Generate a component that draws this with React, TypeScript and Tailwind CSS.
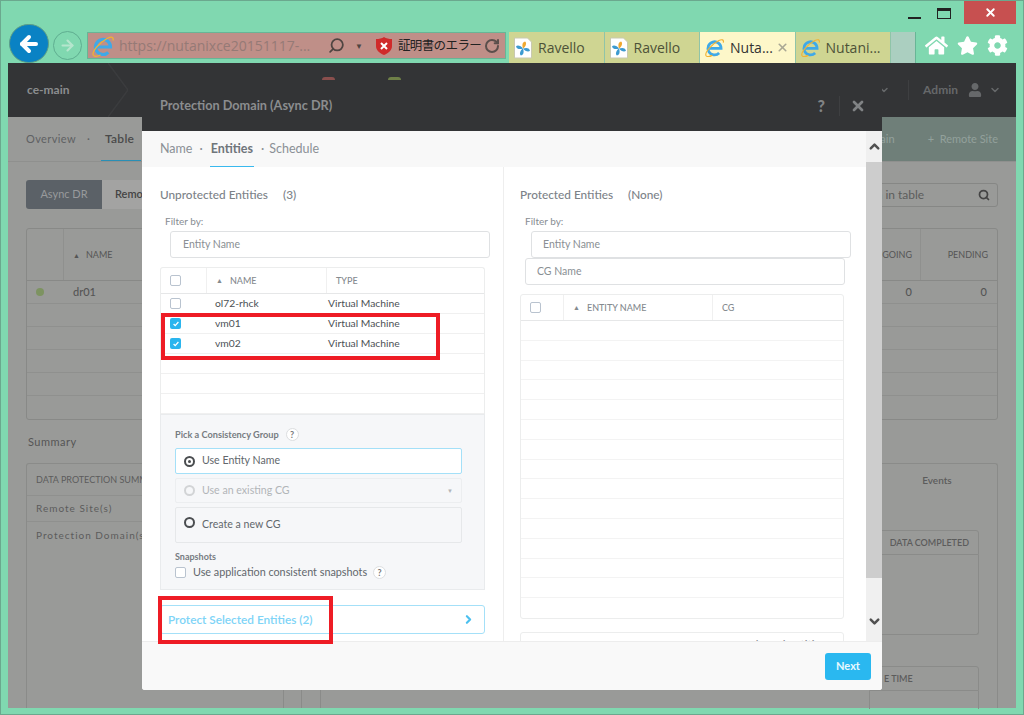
import { ArrowLeft, ArrowRight, ChevronDown, ChevronRight, ChevronUp, RotateCw, Search, X } from 'lucide-react';
import { FaCog, FaHome, FaStar, FaUser } from 'react-icons/fa';

const modalFont = { fontFamily: 'Lato, "Noto Sans", sans-serif' };

function IeIcon({ size = 24 }: { size?: number }) {
  return (
    <svg viewBox="0 0 24 24" width={size} height={size} fill="none" className="shrink-0">
      <path d="M6 13h13.5a7.5 7.5 0 1 0-2.2 5.3" stroke="#3fa9e8" strokeWidth="3.2" />
      <path d="M2.5 21.5C0 18 9 8 17 4c3.5-1.7 6-1 5 2.5" stroke="#f2b233" strokeWidth="1.3" />
      <path d="M2.5 21.5c1.5 1.3 4.5.7 7-.5" stroke="#f2b233" strokeWidth="1.3" />
    </svg>
  );
}

function RavelloIcon() {
  return (
    <svg viewBox="0 0 20 22" width="20" height="22" className="shrink-0">
      <path d="M1.5 1h13l4 4v16h-17z" fill="#fff" stroke="#c9c9b0" />
      <g transform="translate(10 11.5)">
        <path d="M0 0C-1-3-1-6 2-7c2 1 1 5-2 7z" fill="#f0a830" />
        <path d="M0 0C3-1 6-1 7 2c-1 2-5 1-7-2z" fill="#3c9ad0" />
        <path d="M0 0C1 3 1 6-2 7c-2-1-1-5 2-7z" fill="#3c9ad0" />
        <path d="M0 0C-3 1-6 1-7-2c1-2 5-1 7 2z" fill="#3c9ad0" />
      </g>
    </svg>
  );
}

function BrowserTab({ label, active, ie, close }: { label: string; active?: boolean; ie?: boolean; close?: boolean }) {
  return (
    <div
      className={`flex h-[31px] w-[95.5px] shrink-0 items-center gap-[5px] border-r border-[#8fc4a8] pl-[4px] text-[14px] ${
        active ? 'bg-[#fdf7c9] text-[#333]' : 'bg-[#cfd592] text-[#4d5238]'
      }`}
    >
      {ie ? <IeIcon size={21} /> : <RavelloIcon />}
      <span className="whitespace-nowrap">{label}</span>
      {close && <X size={13} strokeWidth={3} className="-ml-[2px] text-[#a9a794]" />}
    </div>
  );
}

function Checkbox({ checked }: { checked?: boolean }) {
  if (checked) {
    return (
      <span className="flex h-[11px] w-[11px] shrink-0 items-center justify-center rounded-[2px] bg-[#2ab5ee]">
        <svg viewBox="0 0 10 10" width="8" height="8" fill="none">
          <path d="M2 5l2 2 4-4.5" stroke="#fff" strokeWidth="1.6" />
        </svg>
      </span>
    );
  }
  return <span className="h-[11px] w-[11px] shrink-0 rounded-[2px] border border-[#b9c3cf] bg-white" />;
}

function Radio({ tone = 'dark', dot }: { tone?: 'dark' | 'light'; dot?: boolean }) {
  return (
    <span
      className={`flex h-[11px] w-[11px] shrink-0 items-center justify-center rounded-full border-2 ${
        tone === 'dark' ? 'border-[#4a4d50]' : 'border-[#d2d4d6]'
      }`}
    >
      {dot && <span className="h-[3px] w-[3px] rounded-full bg-[#4a4d50]" />}
    </span>
  );
}

function Help() {
  return (
    <span className="flex h-[13px] w-[13px] items-center justify-center rounded-full border border-[#dcdee0] bg-white text-[9px] font-bold leading-none text-[#777]">
      ?
    </span>
  );
}

function TextInput({ placeholder, className }: { placeholder: string; className: string }) {
  return (
    <div className={`flex h-[27px] items-center rounded-[3px] border border-[#dfe1e3] bg-white text-[10.5px] text-[#8a8f94] ${className}`}>
      {placeholder}
    </div>
  );
}

const entityRows = [
  { name: 'ol72-rhck', type: 'Virtual Machine', checked: false },
  { name: 'vm01', type: 'Virtual Machine', checked: true },
  { name: 'vm02', type: 'Virtual Machine', checked: true },
  { name: '', type: '', checked: false },
  { name: '', type: '', checked: false },
  { name: '', type: '', checked: false },
];

function Modal() {
  return (
    <div style={modalFont} className="absolute left-[134px] top-[17px] flex h-[610px] w-[740px] flex-col overflow-hidden rounded-b-[3px] bg-white">
      {/* Header */}
      <div className="flex h-[51px] shrink-0 items-center justify-between bg-[#333436] pl-[18px] pr-[16px]">
        <span className="text-[12.7px] font-bold text-[#8b8d8f]">Protection Domain (Async DR)</span>
        <div className="flex items-center text-[#818385]">
          <span className="text-[16px] font-black leading-none">?</span>
          <span className="ml-[14px] mr-[10px] h-[20px] w-px bg-[#3e3f41]" />
          <X size={16} strokeWidth={4} />
        </div>
      </div>

      <div className="flex min-h-0 flex-1">
        <div className="flex min-w-0 flex-1 flex-col">
          {/* Steps */}
          <div className="flex h-[36px] shrink-0 items-center gap-[7px] bg-[#f8f8f8] pl-[18px] text-[12.5px] text-[#8b9096]">
            <span>Name</span>
            <span>·</span>
            <span className="relative flex h-full items-center px-[1px] font-bold text-[#6f757b]">
              Entities
              <span className="absolute inset-x-0 bottom-0 h-[1px] bg-[#39b9ee]" />
            </span>
            <span>·</span>
            <span className="-ml-[2px]">Schedule</span>
          </div>

          <div className="flex min-h-0 flex-1 overflow-hidden">
            {/* Unprotected */}
            <div className="w-[362px] shrink-0 border-r border-[#eeeeee] pl-[18px] pt-[20px]">
              <div className="flex h-[16px] items-center text-[11.8px] font-medium text-[#7c8288]">
                <span className="w-[123px]">Unprotected Entities</span>
                <span>(3)</span>
              </div>
              <div className="ml-[5px] mt-[11px] h-[14px] text-[10px] leading-[14px] text-[#888d92]">Filter by:</div>
              <TextInput placeholder="Entity Name" className="ml-[10px] mt-[3px] w-[320px] pl-[12px]" />

              <div className="mt-[9px] w-[325px] overflow-hidden rounded-t-[3px] border border-b-0 border-[#eceded] text-[10.3px] text-[#4c5155]">
                <div className="flex h-[26px] items-center border-b border-[#e6e7e8] text-[#858a8f]">
                  <span className="flex h-full w-[46px] items-center border-r border-[#f0f0f0] pl-[9px]">
                    <Checkbox />
                  </span>
                  <span className="flex h-full w-[120px] items-center border-r border-[#f0f0f0] pl-[9px] text-[9px] font-medium">
                    <span className="mr-[7px] text-[7px]">▲</span>NAME
                  </span>
                  <span className="pl-[9px] text-[9px] font-medium">TYPE</span>
                </div>
                {entityRows.map((row, i) => (
                  <div key={i} className="flex h-[20px] items-center border-b border-[#f0f0f0]">
                    <span className="flex w-[46px] pl-[9px]">{i < 3 && <Checkbox checked={row.checked} />}</span>
                    <span className="w-[121px] pl-[8px]">{row.name}</span>
                    <span>{row.type}</span>
                  </div>
                ))}
              </div>

              {/* Consistency group */}
              <div className="h-[176px] w-[325px] border border-[#e9ebed] bg-[#f6f7f9] pl-[14px] pt-[13px]">
                <div className="flex h-[13px] items-center gap-[7px] text-[9.2px] font-bold text-[#777c81]">
                  Pick a Consistency Group <Help />
                </div>
                <div className="mt-[7px] flex h-[26px] w-[287px] items-center gap-[7px] rounded-[2px] border border-[#a4e0f8] bg-white pl-[8px] text-[10.6px] text-[#62676c]">
                  <Radio dot /> Use Entity Name
                </div>
                <div className="mt-[4px] flex h-[25px] w-[287px] items-center gap-[7px] rounded-[2px] border border-[#eceef0] pl-[8px] pr-[8px] text-[10.6px] text-[#b2b5b8]">
                  <Radio tone="light" /> Use an existing CG
                  <span className="ml-auto text-[6px]">▼</span>
                </div>
                <div className="mt-[4px] flex h-[36px] w-[287px] items-start gap-[7px] rounded-[2px] border border-[#e6e8ea] pl-[8px] pt-[9px] text-[10.6px] text-[#62676c]">
                  <Radio /> Create a new CG
                </div>
                <div className="mt-[7px] h-[13px] text-[9px] font-bold leading-[13px] text-[#777c81]">Snapshots</div>
                <div className="mt-[3px] flex h-[13px] items-center text-[10.8px] text-[#62676c]">
                  <Checkbox />
                  <span className="ml-[7px] mr-[6px]">Use application consistent snapshots</span>
                  <Help />
                </div>
              </div>

              <div className="mt-[15px] flex h-[29px] w-[325px] items-center justify-between rounded-[3px] border border-[#a4e0f8] pl-[7px] pr-[9px] text-[11.8px] font-semibold text-[#7ed4f7]">
                Protect Selected Entities (2)
                <ChevronRight size={13} strokeWidth={4} className="text-[#4cc0ef]" />
              </div>
            </div>

            {/* Protected */}
            <div className="min-w-0 flex-1 pl-[16px] pt-[20px]">
              <div className="flex h-[16px] items-center text-[11.8px] font-medium text-[#7c8288]">
                <span className="w-[108px]">Protected Entities</span>
                <span>(None)</span>
              </div>
              <div className="ml-[5px] mt-[11px] h-[14px] text-[10px] leading-[14px] text-[#888d92]">Filter by:</div>
              <TextInput placeholder="Entity Name" className="ml-[11px] mt-[3px] w-[320px] pl-[11px]" />
              <TextInput placeholder="CG Name" className="ml-[5px] w-[320px] pl-[11px]" />

              <div className="mt-[9px] w-[324px] overflow-hidden rounded-[3px] border border-[#eceded]">
                <div className="flex h-[26px] items-center border-b border-[#e6e7e8] text-[9px] font-medium text-[#858a8f]">
                  <span className="flex h-full w-[43px] items-center border-r border-[#f0f0f0] pl-[9px]">
                    <Checkbox />
                  </span>
                  <span className="flex h-full w-[149px] items-center border-r border-[#f0f0f0] pl-[9px]">
                    <span className="mr-[7px] text-[7px]">▲</span>ENTITY NAME
                  </span>
                  <span className="pl-[9px]">CG</span>
                </div>
                {Array.from({ length: 15 }, (_, i) => (
                  <div key={i} className="h-[19.8px] border-b border-[#f3f3f3] last:border-b-0" />
                ))}
              </div>

              <div className="mt-[13px] h-[30px] w-[324px] rounded-[3px] border border-[#eceded] pr-[18px] pt-[4px] text-right text-[11px] font-semibold text-[#8a8f94]">
                Unprotect Selected Entities
              </div>
            </div>
          </div>
        </div>

        {/* Scrollbar */}
        <div className="flex w-[16px] shrink-0 flex-col items-center bg-[#f0f0f0]">
          <div className="flex h-[31px] w-full items-center justify-center bg-[#f0f0f0]">
            <ChevronUp size={15} strokeWidth={4} className="text-[#505050]" />
          </div>
          <div className="h-[416px] w-full bg-[#cdcdcd]" />
          <div className="mt-[36px] flex justify-center">
            <ChevronDown size={15} strokeWidth={4} className="text-[#505050]" />
          </div>
        </div>
      </div>

      {/* Footer */}
      <div className="flex h-[49px] shrink-0 items-center justify-end border-t border-[#ededed] bg-[#f9f9f9] pr-[11px]">
        <div className="flex h-[27px] w-[46px] items-center justify-center rounded-[3px] bg-[#2ab8f0] text-[11px] font-bold text-[#e9f8fe]">Next</div>
      </div>
    </div>
  );
}

function Background() {
  return (
    <div style={modalFont} className="flex h-full flex-col bg-[#999a98]">
      <div className="flex h-[54px] shrink-0 items-center bg-[#333436] text-[11px] font-bold text-[#8b8d8f]">
        <span className="pl-[19px] text-[12px]">ce-main</span>
        <span className="ml-auto mr-[18px] text-[#66686a]"><ChevronDown size={12} strokeWidth={3} /></span>
        <span className="mr-[14px] h-[20px] w-px bg-[#3e3f41]" />
        <span className="text-[12px] text-[#66686a]">Admin</span>
        <FaUser size={14} className="ml-[10px] text-[#66686a]" />
        <ChevronDown size={12} strokeWidth={3} className="ml-[7px] mr-[15px] text-[#66686a]" />
      </div>

      <div className="flex h-[45px] shrink-0 items-stretch border-b border-[#8f908e] pl-[18px] text-[11px] text-[#5f6163]">
        <span className="flex items-center tracking-[0.4px]">Overview</span>
        <span className="mx-[11px] flex items-center">·</span>
        <span className="relative flex items-center px-[4px] text-[12px] font-semibold tracking-[0.3px] text-[#4a4a4a]">
          Table
          <span className="absolute bottom-0 left-0 h-[1px] w-[40px] bg-[#2a8fb5]" />
        </span>
        <div className="ml-auto flex w-[300px] items-center justify-end gap-[33px] bg-[#6f7f79] pr-[18px] text-[11px] text-[#93a19c]">
          <span className="whitespace-nowrap">+ Protection Domain</span>
          <span className="whitespace-nowrap">+&nbsp;&nbsp;Remote Site</span>
        </div>
      </div>

      <div className="flex min-h-0 flex-1 flex-col px-[18px]">
        <div className="mt-[18px] flex h-[29px] shrink-0 items-center justify-between">
          <div className="flex h-full overflow-hidden rounded-[3px] text-[11px]">
            <span className="flex w-[76px] items-center justify-center bg-[#5b6167] text-[#989a9c]">Async DR</span>
            <span className="flex w-[80px] items-center bg-[#a3a3a2] pl-[13px] font-semibold text-[#444]">Remote Site</span>
          </div>
          <div className="flex h-[24px] w-[160px] items-center justify-between rounded-[3px] border border-[#868785] pl-[8px] pr-[7px] text-[12px] text-[#5c5d5c]">
            Search in table
            <Search size={12} strokeWidth={3.5} className="text-[#444]" />
          </div>
        </div>

        <div className="mt-[19px] shrink-0 rounded-[3px] border border-[#888987] text-[#555]">
          <div className="flex h-[52px] items-center border-b border-[#888987] text-[9px]">
            <span className="h-full w-[37px] border-r border-[#8f908e]" />
            <span className="pl-[9px]"><span className="mr-[6px] text-[7px]">▲</span>NAME</span>
            <span className="ml-auto flex h-full w-[100px] items-center justify-end pr-[8px]">ONGOING</span>
            <span className="flex h-full w-[77px] items-center justify-end border-l border-[#8f908e] pr-[9px]">PENDING</span>
          </div>
          <div className="flex h-[23px] items-center border-b border-[#8f908e] text-[11px]">
            <span className="ml-[9px] h-[8px] w-[8px] rounded-full bg-[#7d9361]" />
            <span className="ml-[29px] font-medium">dr01</span>
            <span className="ml-auto w-[30px] text-right font-medium">0</span>
            <span className="w-[85px] pr-[10px] text-right font-medium">0</span>
          </div>
          {Array.from({ length: 5 }, (_, i) => (
            <div key={i} className="h-[23px] border-b border-[#8f908e] last:border-b-0" />
          ))}
        </div>

        <div className="mt-[14px] h-[16px] shrink-0 pl-[2px] text-[11px] leading-[16px] tracking-[0.5px] text-[#555]">Summary</div>

        <div className="mt-[13px] flex min-h-0 flex-1 justify-between rounded-t-[3px] border border-b-0 border-[#8a8b89] text-[#5c5c5c]">
          <div className="flex w-[257px] flex-col text-[10px]">
            <div className="flex h-[32px] shrink-0 items-center whitespace-nowrap border-b border-[#8f908e] pl-[9px] text-[9px]">DATA PROTECTION SUMMARY</div>
            <div className="flex h-[26px] shrink-0 items-center border-b border-[#8f908e] pl-[9px] tracking-[1px]">Remote Site(s)</div>
            <div className="flex h-[27px] shrink-0 items-center pl-[9px] tracking-[1px]">Protection Domain(s)</div>
            <div className="mt-auto flex h-[18px] shrink-0 translate-x-[256px]">
              <span className="w-[19px] border-x border-[#8a8b89]" />
              <span className="w-[19px] border-r border-[#8a8b89]" />
            </div>
          </div>

          <div className="flex flex-col items-end pr-[18px]">
            <div className="flex h-[32px] w-[96px] shrink-0 items-center justify-center pl-[12px] text-[10px] font-semibold">Events</div>
            <div className="mt-[34px] flex h-[25px] w-[110px] shrink-0 items-center justify-end rounded-t-[3px] border border-[#8a8b89] pr-[9px] text-[9px] font-semibold">DATA COMPLETED</div>
            <div className="h-[80px] w-[110px] shrink-0 rounded-b-[3px] border border-t-0 border-[#8a8b89]" />
            <div className="mt-[31px] flex h-[25px] w-[110px] shrink-0 items-center rounded-t-[3px] border border-[#8a8b89] pl-[14px] text-[9px] font-semibold">E TIME</div>
            <div className="h-[18px] w-[110px] shrink-0 border-x border-[#8a8b89]" />
          </div>
        </div>
      </div>
    </div>
  );
}

export default function App() {
  return (
    <div className="relative flex h-[715px] w-[1024px] flex-col overflow-hidden border border-[#6ba88e] bg-[#80d8b0]" style={{ fontFamily: '"Open Sans", sans-serif' }}>
      {/* Window buttons */}
      <div className="flex h-[23px] shrink-0 justify-end pr-[7px]">
        <div className="mr-[16px] mt-[16px] h-[2px] w-[13px] bg-[#222]" />
        <div className="mr-[13px] mt-[7px] h-[11px] w-[14px] border border-t-[3px] border-[#222]" />
        <div className="flex h-[23px] w-[52px] items-center justify-center bg-[#c75050]">
          <X size={13} strokeWidth={3.5} className="text-white" />
        </div>
      </div>

      {/* Toolbar */}
      <div className="relative z-10 flex h-[39px] shrink-0 items-start pl-[8px]">
        <div className="flex h-[39px] w-[40px] shrink-0 items-center justify-center rounded-full border border-[#5e9e86] bg-[#0a82c4]">
          <ArrowLeft size={24} strokeWidth={4} className="text-white" />
        </div>
        <div className="ml-[4px] mt-[7px] flex h-[29px] w-[29px] shrink-0 items-center justify-center rounded-full border border-[#5fae90]">
          <ArrowRight size={17} strokeWidth={3} className="text-[#b5e6cd]" />
        </div>
        <div className="ml-[5px] mt-[8px] flex h-[27px] w-[419px] shrink-0 items-center border border-[#68b596] bg-[#bf8f88] pl-[3px] pr-[5px]">
          <IeIcon size={24} />
          <span className="ml-[4px] w-[205px] whitespace-nowrap text-[14px] text-[#957a76]">https://nutanixce20151117-...</span>
          <Search size={17} strokeWidth={2.5} className="ml-[4px] -scale-x-100 text-[#4f4542]" />
          <span className="ml-[10px] text-[8px] text-[#4f4542]">▼</span>
          <svg viewBox="0 0 16 18" width="16" height="18" className="ml-[13px] shrink-0">
            <path d="M8 0c2 1.5 5 2 8 2v7c0 4-3 7-8 9-5-2-8-5-8-9V2c3 0 6-.5 8-2z" fill="#d02a2a" />
            <path d="M5 6l6 6M11 6l-6 6" stroke="#fff" strokeWidth="2" />
          </svg>
          <span className="ml-[6px] whitespace-nowrap text-[12.5px] tracking-[-0.6px] text-[#222]" style={{ fontFamily: '"Noto Sans CJK JP", sans-serif' }}>
            証明書のエラー
          </span>
          <RotateCw size={16} strokeWidth={3} className="ml-auto text-[#5b4f4c]" />
        </div>
        <div className="ml-[3px] mt-[8px] flex self-stretch">
          <BrowserTab label="Ravello" />
          <BrowserTab label="Ravello" />
          <BrowserTab label="Nuta..." active ie close />
          <BrowserTab label="Nutani..." ie />
          <div className="h-[31px] w-[25px] border-r border-[#68b596] bg-[#abcfc0]" />
        </div>
        <div className="ml-[9px] mt-[10px] flex items-center gap-[9px] text-white">
          <FaHome size={23} />
          <FaStar size={21} />
          <FaCog size={21} />
        </div>
      </div>

      {/* Page */}
      <div className="relative mb-[6px] ml-[7px] mr-[7px] min-h-0 flex-1">
        <Background />
        <span className="absolute left-[314px] top-[14px] h-[3px] w-[13px] rounded-t-full bg-[#8a4f4d]" />
        <span className="absolute left-[380px] top-[14px] h-[3px] w-[13px] rounded-t-full bg-[#6f8048]" />
        <svg viewBox="0 0 20 54" className="absolute left-[100px] top-0 h-[54px] w-[20px]" fill="none">
          <path d="M0 0l20 27L0 54" stroke="#3b3c3e" strokeWidth="1.5" />
        </svg>
        <Modal />
      </div>

      {/* Red annotations */}
      <div className="absolute left-[160px] top-[312px] h-[47px] w-[279px] border-[4px] border-[#ee1c25]" />
      <div className="absolute left-[157px] top-[595px] h-[48px] w-[175px] border-[4px] border-[#ee1c25]" />
    </div>
  );
}
